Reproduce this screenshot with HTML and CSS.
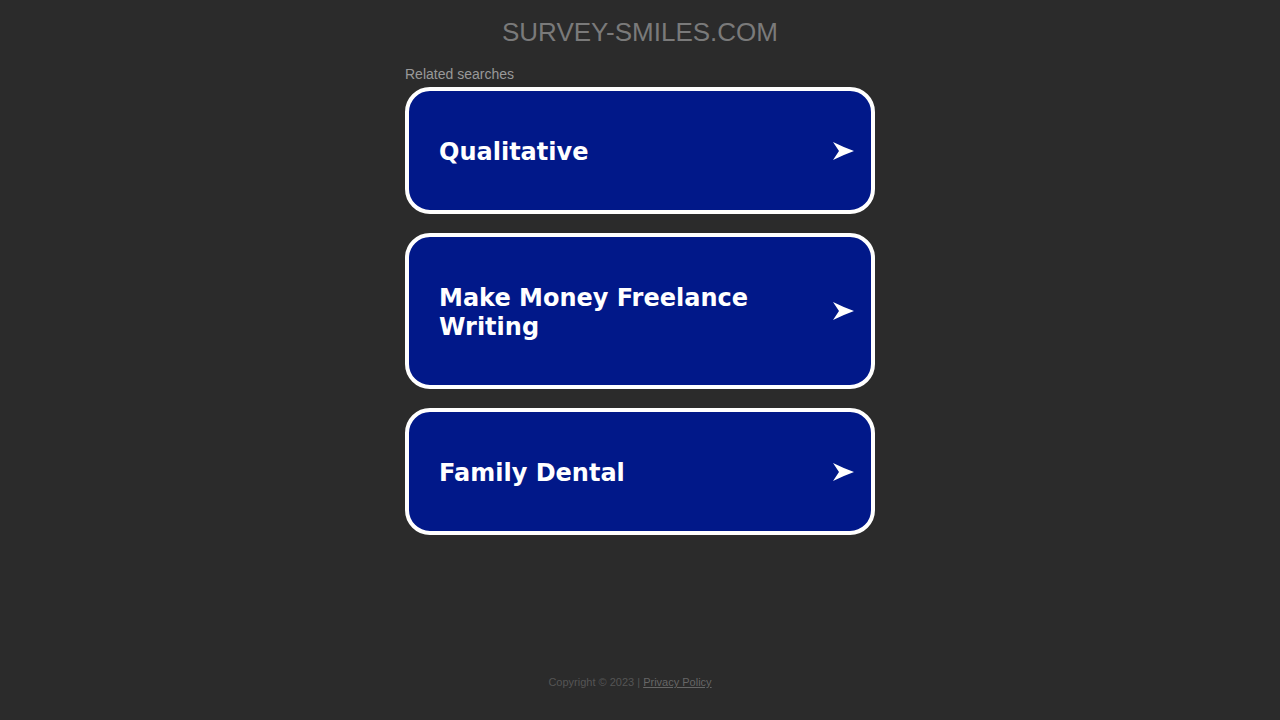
FILE: index.html
```html
<!DOCTYPE html>
<html lang="en">
<head>
    <meta charset="UTF-8">
    <meta name="viewport" content="width=device-width, initial-scale=1.0">
    <title>survey-smiles.com</title>
    <link rel="stylesheet" href="styles.css">
</head>
<body>
    <div class="page">
        <h1 class="domain">SURVEY-SMILES.COM</h1>

        <div class="related">
            <p class="related-title">Related searches</p>
            <a class="search-card" href="#">
                <span class="search-text">Qualitative</span>
                <svg class="search-arrow" viewBox="0 0 21 18" width="21" height="18"><path d="M0 0 Q10 5 21 9 Q10 13 0 18 L6 9 Z" fill="#fff"/></svg>
            </a>
            <a class="search-card" href="#">
                <span class="search-text">Make Money Freelance Writing</span>
                <svg class="search-arrow" viewBox="0 0 21 18" width="21" height="18"><path d="M0 0 Q10 5 21 9 Q10 13 0 18 L6 9 Z" fill="#fff"/></svg>
            </a>
            <a class="search-card" href="#">
                <span class="search-text">Family Dental</span>
                <svg class="search-arrow" viewBox="0 0 21 18" width="21" height="18"><path d="M0 0 Q10 5 21 9 Q10 13 0 18 L6 9 Z" fill="#fff"/></svg>
            </a>
        </div>
    </div>

    <!-- footer -->
    <div class="footer">
        Copyright &copy; 2023 | <a href="#">Privacy Policy</a>
    </div>
</body>
</html>
```

FILE: styles.css
```css
body {
    margin: 0;
    background-color: #2b2b2b;
    font-family: Arial, "Liberation Sans", sans-serif;
    height: 720px;
    position: relative;
}
.page {
    width: 470px;
    margin: 0 auto;
    padding-top: 17px;
}
.domain {
    margin: 0;
    text-align: center;
    font-size: 26px;
    font-weight: normal;
    color: #7a7a7a;
    line-height: 30px;
}
.related {
    margin-top: 19px;
}
.related-title {
    margin: 0 0 5px 0;
    font-size: 14px;
    color: #999;
    line-height: 16px;
}
.search-card {
    display: flex;
    align-items: center;
    justify-content: space-between;
    box-sizing: border-box;
    padding: 47px 17px 43px 30px;
    margin-bottom: 19px;
    background-color: #011889;
    border: 4px solid #fff;
    border-radius: 25px;
    text-decoration: none;
    color: #fff;
}
.search-text {
    font-family: "DejaVu Sans", Verdana, sans-serif;
    font-weight: bold;
    font-size: 24px;
    line-height: 29px;
    max-width: 360px;
}
.search-arrow {
    flex-shrink: 0;
    margin-bottom: 4px;
}
.footer {
    position: absolute;
    left: 0;
    right: 20px;
    top: 676px;
    text-align: center;
    font-size: 11px;
    color: #555;
}
.footer a {
    color: #666;
}
```
